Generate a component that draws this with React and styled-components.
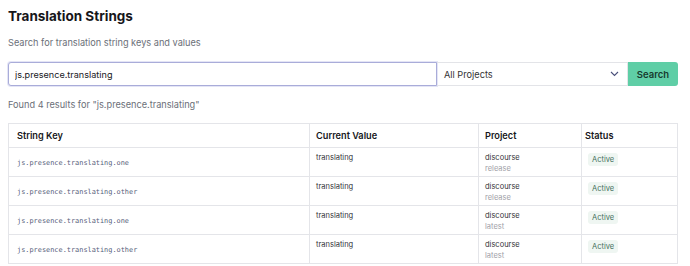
import styled, { createGlobalStyle } from "styled-components"

const GlobalStyle = createGlobalStyle`
    body {
        margin: 0;
        background: #fff;
        font-family: Inter, "Noto Sans", sans-serif;
        color: #1b1b1f;
    }
`

const results = [
    { key: "js.presence.translating.one", value: "translating", project: "discourse", version: "release" },
    { key: "js.presence.translating.other", value: "translating", project: "discourse", version: "release" },
    { key: "js.presence.translating.one", value: "translating", project: "discourse", version: "latest" },
    { key: "js.presence.translating.other", value: "translating", project: "discourse", version: "latest" },
]

const query = "js.presence.translating"

const App = () => {
    return (
        <>
            <GlobalStyle />
            <Page>
                <Title>Translation Strings</Title>
                <Subtitle>Search for translation string keys and values</Subtitle>
                <SearchForm onSubmit={(e) => e.preventDefault()}>
                    <SearchInput defaultValue={query} />
                    <SelectBox>
                        <span>All Projects</span>
                        <svg width="9" height="6" viewBox="0 0 9 6" fill="none">
                            <path d="M1 1l3.5 3.5L8 1" stroke="#4a4f7a" strokeWidth="1.1" />
                        </svg>
                    </SelectBox>
                    <SearchButton type="submit">Search</SearchButton>
                </SearchForm>
                <Found>Found 4 results for "{query}"</Found>
                <Table>
                    <colgroup>
                        <col style={{ width: 301 }} />
                        <col style={{ width: 169 }} />
                        <col style={{ width: 103 }} />
                        <col />
                    </colgroup>
                    <thead>
                        <tr>
                            <Th $pad={8}>String Key</Th>
                            <Th>Current Value</Th>
                            <Th>Project</Th>
                            <Th $pad={3}>Status</Th>
                        </tr>
                    </thead>
                    <tbody>
                        {results.map((r, i) => (
                            <Row key={i}>
                                <KeyCell>{r.key}</KeyCell>
                                <Td>{r.value}</Td>
                                <Td>
                                    <div>{r.project}</div>
                                    <Version>{r.version}</Version>
                                </Td>
                                <Td>
                                    <Badge>Active</Badge>
                                </Td>
                            </Row>
                        ))}
                    </tbody>
                </Table>
            </Page>
        </>
    )
}

export default App

const Page = styled.div`
    padding: 8px 12px 0 8px;
    width: 670px;
`

const Title = styled.h1`
    margin: 0;
    font-size: 13.5px;
    line-height: 16px;
    font-weight: 700;
    color: #16161a;
`

const Subtitle = styled.p`
    margin: 13px 0 0;
    font-size: 9.2px;
    line-height: 12px;
    color: #6b6f78;
`

const SearchForm = styled.form`
    display: flex;
    margin-top: 13px;
    height: 24px;
`

const SearchInput = styled.input`
    box-sizing: border-box;
    width: 429px;
    height: 24px;
    border: 1px solid #a9acd9;
    border-radius: 3px 0 0 3px;
    padding: 0 6px;
    font-family: Inter, sans-serif;
    font-size: 9.1px;
    color: #202024;
    box-shadow: 0 0 0 1px #e4e5f6;
    outline: none;
`

const SelectBox = styled.div`
    box-sizing: border-box;
    width: 191px;
    height: 24px;
    display: flex;
    align-items: center;
    justify-content: space-between;
    padding: 0 8px 0 7px;
    border: 1px solid #e3e4e8;
    border-left: none;
    font-size: 9.2px;
    color: #333;
`

const SearchButton = styled.button`
    width: 50px;
    height: 24px;
    border: none;
    border-radius: 0 3px 3px 0;
    background: #5fcea6;
    color: #173a2e;
    font-family: Inter, sans-serif;
    font-size: 9.5px;
    font-weight: 600;
    padding: 0;
`

const Found = styled.p`
    margin: 13px 0 0;
    font-size: 9.2px;
    line-height: 12px;
    color: #6b6f78;
`

const Table = styled.table`
    margin-top: 12px;
    width: 670px;
    border-collapse: collapse;
    table-layout: fixed;
    border: 1px solid #e4e5e9;
`

const Th = styled.th`
    height: 23px;
    padding: 0 ${(p) => p.$pad ?? 6}px;
    text-align: left;
    font-size: 9.2px;
    font-weight: 600;
    color: #17171b;
    border: 1px solid #e4e5e9;
    vertical-align: middle;
`

const Row = styled.tr`
    height: 28px;
`

const Td = styled.td`
    padding: 4px 6px 2px;
    font-size: 7.5px;
    line-height: 11px;
    color: #333338;
    border: 1px solid #e4e5e9;
    vertical-align: top;
`

const KeyCell = styled(Td)`
    padding-left: 8px;
    vertical-align: middle;
    font-family: "DejaVu Sans Mono", monospace;
    font-size: 6.9px;
    color: #555d7a;
`

const Version = styled.div`
    color: #9fa1a8;
`

const Badge = styled.span`
    display: inline-block;
    margin-top: 1px;
    padding: 1px 4px;
    border-radius: 3px;
    background: #eff6f2;
    color: #43705c;
    font-size: 7.5px;
    line-height: 11px;
`
